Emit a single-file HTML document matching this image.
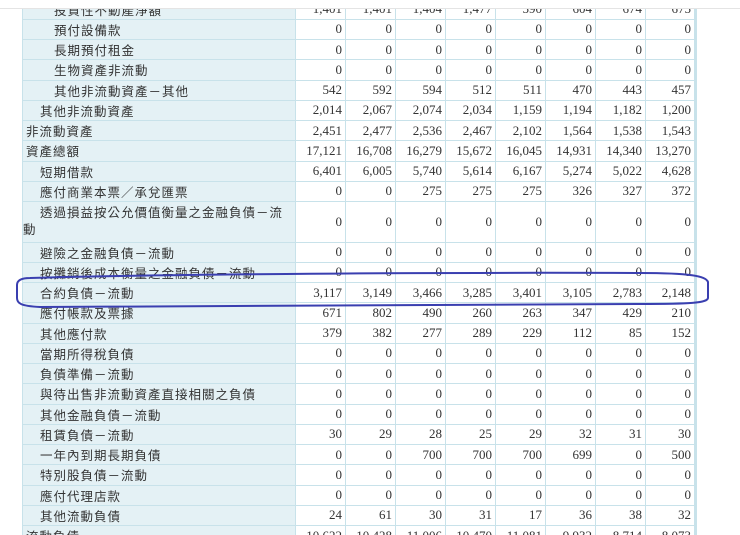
<!DOCTYPE html>
<html><head><meta charset="utf-8"><style>
html,body{margin:0;padding:0;background:#fff;width:740px;height:535px;overflow:hidden;position:relative}
table{position:absolute;left:22px;top:-1.5px;border-collapse:collapse;table-layout:fixed;width:674px}
td{border:1px solid #c8e2ea;height:19.25px;padding:0;box-sizing:border-box;color:#333;white-space:nowrap;overflow:hidden}
td.l{background:#e4f1f5;font:12.5px "Liberation Sans","Noto Sans CJK TC",sans-serif;letter-spacing:1px;width:273px}
td.n{font:13px "Liberation Serif",serif;text-align:right;padding-right:3px;width:50px}
td.l1{padding-left:3px}td.l2{padding-left:17px}td.l3{padding-left:31px}
tr{height:20.25px}
tr.d{height:40.5px}
tr.d td.l{white-space:normal;padding-left:0;text-indent:17px;line-height:17px}
table tr td:last-child{border-right:3px solid #c8e2ea}
.top{position:absolute;left:0;top:0;width:740px;height:8px;background:#fff;border-bottom:1px solid #e4e4e4}
svg{position:absolute;left:0;top:0}
</style></head><body>
<table>
<tr><td class="l l3">投資性不動產淨額</td><td class="n">1,401</td><td class="n">1,401</td><td class="n">1,404</td><td class="n">1,477</td><td class="n">590</td><td class="n">604</td><td class="n">674</td><td class="n">675</td></tr>
<tr><td class="l l3">預付設備款</td><td class="n">0</td><td class="n">0</td><td class="n">0</td><td class="n">0</td><td class="n">0</td><td class="n">0</td><td class="n">0</td><td class="n">0</td></tr>
<tr><td class="l l3">長期預付租金</td><td class="n">0</td><td class="n">0</td><td class="n">0</td><td class="n">0</td><td class="n">0</td><td class="n">0</td><td class="n">0</td><td class="n">0</td></tr>
<tr><td class="l l3">生物資產非流動</td><td class="n">0</td><td class="n">0</td><td class="n">0</td><td class="n">0</td><td class="n">0</td><td class="n">0</td><td class="n">0</td><td class="n">0</td></tr>
<tr><td class="l l3">其他非流動資產－其他</td><td class="n">542</td><td class="n">592</td><td class="n">594</td><td class="n">512</td><td class="n">511</td><td class="n">470</td><td class="n">443</td><td class="n">457</td></tr>
<tr><td class="l l2">其他非流動資產</td><td class="n">2,014</td><td class="n">2,067</td><td class="n">2,074</td><td class="n">2,034</td><td class="n">1,159</td><td class="n">1,194</td><td class="n">1,182</td><td class="n">1,200</td></tr>
<tr><td class="l l1">非流動資產</td><td class="n">2,451</td><td class="n">2,477</td><td class="n">2,536</td><td class="n">2,467</td><td class="n">2,102</td><td class="n">1,564</td><td class="n">1,538</td><td class="n">1,543</td></tr>
<tr><td class="l l1">資產總額</td><td class="n">17,121</td><td class="n">16,708</td><td class="n">16,279</td><td class="n">15,672</td><td class="n">16,045</td><td class="n">14,931</td><td class="n">14,340</td><td class="n">13,270</td></tr>
<tr><td class="l l2">短期借款</td><td class="n">6,401</td><td class="n">6,005</td><td class="n">5,740</td><td class="n">5,614</td><td class="n">6,167</td><td class="n">5,274</td><td class="n">5,022</td><td class="n">4,628</td></tr>
<tr><td class="l l2">應付商業本票／承兌匯票</td><td class="n">0</td><td class="n">0</td><td class="n">275</td><td class="n">275</td><td class="n">275</td><td class="n">326</td><td class="n">327</td><td class="n">372</td></tr>
<tr class="d"><td class="l">透過損益按公允價值衡量之金融負債－流動</td><td class="n">0</td><td class="n">0</td><td class="n">0</td><td class="n">0</td><td class="n">0</td><td class="n">0</td><td class="n">0</td><td class="n">0</td></tr>
<tr><td class="l l2">避險之金融負債－流動</td><td class="n">0</td><td class="n">0</td><td class="n">0</td><td class="n">0</td><td class="n">0</td><td class="n">0</td><td class="n">0</td><td class="n">0</td></tr>
<tr><td class="l l2">按攤銷後成本衡量之金融負債－流動</td><td class="n">0</td><td class="n">0</td><td class="n">0</td><td class="n">0</td><td class="n">0</td><td class="n">0</td><td class="n">0</td><td class="n">0</td></tr>
<tr><td class="l l2">合約負債－流動</td><td class="n">3,117</td><td class="n">3,149</td><td class="n">3,466</td><td class="n">3,285</td><td class="n">3,401</td><td class="n">3,105</td><td class="n">2,783</td><td class="n">2,148</td></tr>
<tr><td class="l l2">應付帳款及票據</td><td class="n">671</td><td class="n">802</td><td class="n">490</td><td class="n">260</td><td class="n">263</td><td class="n">347</td><td class="n">429</td><td class="n">210</td></tr>
<tr><td class="l l2">其他應付款</td><td class="n">379</td><td class="n">382</td><td class="n">277</td><td class="n">289</td><td class="n">229</td><td class="n">112</td><td class="n">85</td><td class="n">152</td></tr>
<tr><td class="l l2">當期所得稅負債</td><td class="n">0</td><td class="n">0</td><td class="n">0</td><td class="n">0</td><td class="n">0</td><td class="n">0</td><td class="n">0</td><td class="n">0</td></tr>
<tr><td class="l l2">負債準備－流動</td><td class="n">0</td><td class="n">0</td><td class="n">0</td><td class="n">0</td><td class="n">0</td><td class="n">0</td><td class="n">0</td><td class="n">0</td></tr>
<tr><td class="l l2">與待出售非流動資產直接相關之負債</td><td class="n">0</td><td class="n">0</td><td class="n">0</td><td class="n">0</td><td class="n">0</td><td class="n">0</td><td class="n">0</td><td class="n">0</td></tr>
<tr><td class="l l2">其他金融負債－流動</td><td class="n">0</td><td class="n">0</td><td class="n">0</td><td class="n">0</td><td class="n">0</td><td class="n">0</td><td class="n">0</td><td class="n">0</td></tr>
<tr><td class="l l2">租賃負債－流動</td><td class="n">30</td><td class="n">29</td><td class="n">28</td><td class="n">25</td><td class="n">29</td><td class="n">32</td><td class="n">31</td><td class="n">30</td></tr>
<tr><td class="l l2">一年內到期長期負債</td><td class="n">0</td><td class="n">0</td><td class="n">700</td><td class="n">700</td><td class="n">700</td><td class="n">699</td><td class="n">0</td><td class="n">500</td></tr>
<tr><td class="l l2">特別股負債－流動</td><td class="n">0</td><td class="n">0</td><td class="n">0</td><td class="n">0</td><td class="n">0</td><td class="n">0</td><td class="n">0</td><td class="n">0</td></tr>
<tr><td class="l l2">應付代理店款</td><td class="n">0</td><td class="n">0</td><td class="n">0</td><td class="n">0</td><td class="n">0</td><td class="n">0</td><td class="n">0</td><td class="n">0</td></tr>
<tr><td class="l l2">其他流動負債</td><td class="n">24</td><td class="n">61</td><td class="n">30</td><td class="n">31</td><td class="n">17</td><td class="n">36</td><td class="n">38</td><td class="n">32</td></tr>
<tr><td class="l l1">流動負債</td><td class="n">10,622</td><td class="n">10,428</td><td class="n">11,006</td><td class="n">10,470</td><td class="n">11,081</td><td class="n">9,932</td><td class="n">8,714</td><td class="n">8,073</td></tr>
</table>
<div class="top"></div>
<svg width="740" height="535"><path d="M30 278 C120 275 420 272 640 273 C690 273 706 276 708 282 L708 298 C707 303 690 304 640 304 L40 307 C20 306 17 303 17 298 L17 285 C17 280 22 278 30 278 Z" fill="none" stroke="#3a3fb0" stroke-width="2"/></svg>
</body></html>
